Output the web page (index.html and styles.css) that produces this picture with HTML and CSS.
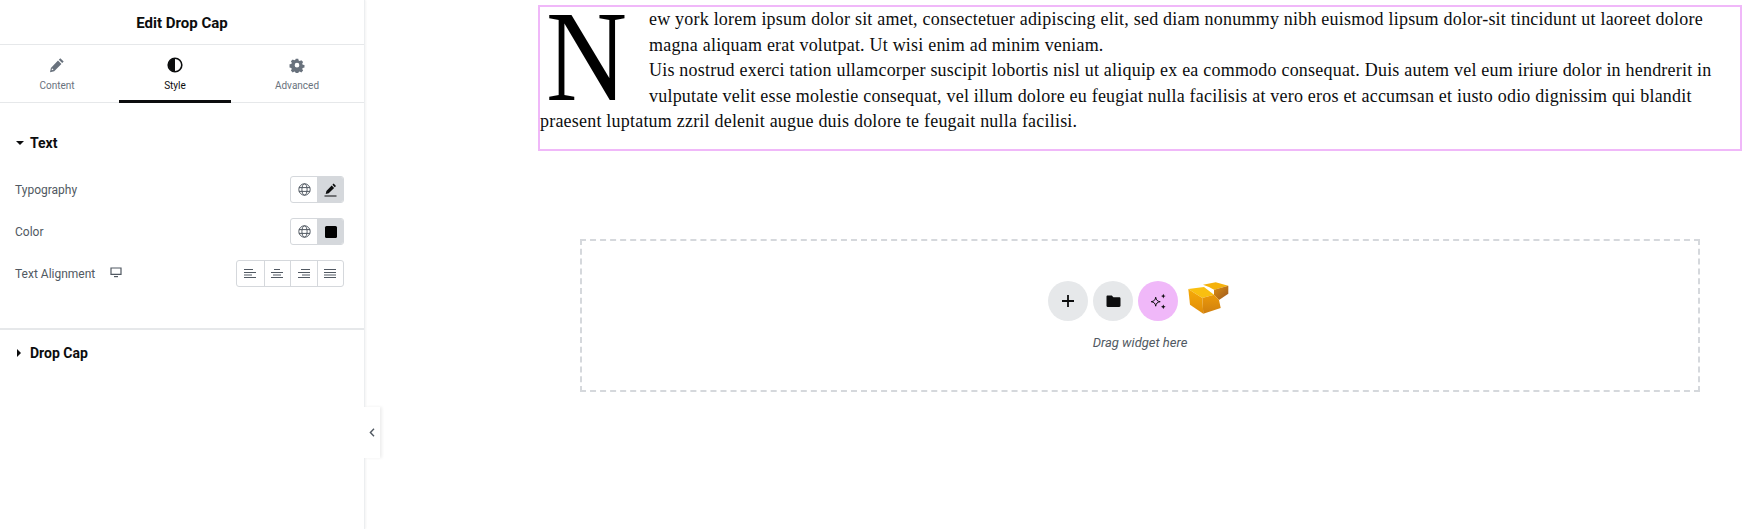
FILE: index.html
```html
<!DOCTYPE html>
<html lang="en">
<head>
  <meta charset="utf-8" />
  <title>Edit Drop Cap</title>
  <link rel="stylesheet" href="styles.css">
</head>
<body>
  <aside class="panel">
    <header class="panel-head">Edit Drop Cap</header>
    <nav class="tabs">
      <div class="tab">
        <svg width="16" height="16" viewBox="0 0 16 16"><path fill="#69727d" d="M11.3 1.2l3.4 3.4-1.5 1.500-3.400-3.400zM9 3.500l3.400 3.400-7.200 7.300-4.200 1 .9-4.300zM3 11.200l-.4 2 2-.5z"/></svg>
        <span>Content</span>
      </div>
      <div class="tab active">
        <svg width="16" height="16" viewBox="0 0 16 16"><circle cx="8" cy="8" r="6.800" fill="none" stroke="#0c0d0e" stroke-width="1.600"/><path fill="#0c0d0e" d="M8 1.500a6.500 6.500 0 0 0 0 13z"/></svg>
        <span>Style</span>
      </div>
      <div class="tab">
        <svg width="16" height="16" viewBox="0 0 16 16"><path fill="#69727d" fill-rule="evenodd" d="M6.600 1h2.800l.4 2 1.200.6 1.800-1 2 2-1 1.800.5 1.200 2 .4v2.800l-2 .4-.5 1.200 1 1.800-2 2-1.800-1-1.200.5-.4 2H6.600l-.4-2-1.200-.5-1.800 1-2-2 1-1.800-.5-1.200-2-.4V7.200l2-.4.5-1.200-1-1.800 2-2 1.800 1 1.200-.6zM8 5.600a2.600 2.600 0 1 0 0 5.200 2.600 2.600 0 0 0 0-5.200z" transform="translate(.8 .8) scale(.9)"/></svg>
        <span>Advanced</span>
      </div>
    </nav>

    <section class="section">
      <h3 class="section-title"><i class="caret-down"></i>Text</h3>
      <div class="control">
        <label>Typography</label>
        <div class="btn-group">
          <span class="btn">
            <svg width="13" height="13" viewBox="0 0 13 13"><g fill="none" stroke="#515962" stroke-width="1"><circle cx="6.500" cy="6.500" r="5.700"/><ellipse cx="6.500" cy="6.500" rx="2.600" ry="5.700"/><path d="M1 4.600h11M1 8.400h11"/></g></svg>
          </span>
          <span class="btn on">
            <svg width="13" height="14" viewBox="0 0 13 14"><path fill="#0c0d0e" d="M9.600.6l2.400 2.400-1.200 1.200-2.400-2.400zM7.700 2.500l2.400 2.400-5.400 5.400-3 .7.7-3z"/><path stroke="#0c0d0e" stroke-width="1.200" d="M.5 13h12"/></svg>
          </span>
        </div>
      </div>
      <div class="control">
        <label>Color</label>
        <div class="btn-group">
          <span class="btn">
            <svg width="13" height="13" viewBox="0 0 13 13"><g fill="none" stroke="#515962" stroke-width="1"><circle cx="6.500" cy="6.500" r="5.700"/><ellipse cx="6.500" cy="6.500" rx="2.600" ry="5.700"/><path d="M1 4.600h11M1 8.400h11"/></g></svg>
          </span>
          <span class="btn on"><i class="swatch"></i></span>
        </div>
      </div>
      <div class="control">
        <label>Text Alignment
          <svg class="device" width="12" height="11" viewBox="0 0 12 11"><path fill="none" stroke="#515962" stroke-width="1.200" d="M1 1h10v6.400H1z"/><path fill="#515962" d="M4 9h4v1.200H4z"/></svg>
        </label>
        <div class="btn-group wide">
          <span class="btn"><svg width="12" height="9" viewBox="0 0 12 9"><path stroke="#515962" d="M0 .5h9M0 3.500h12M0 6h8M0 8.500h12"/></svg></span>
          <span class="btn"><svg width="12" height="9" viewBox="0 0 12 9"><path stroke="#515962" d="M3 .5h6M0 3.500h12M2 6h8M0 8.500h12"/></svg></span>
          <span class="btn"><svg width="12" height="9" viewBox="0 0 12 9"><path stroke="#515962" d="M3 .5h9M0 3.500h12M4 6h8M0 8.500h12"/></svg></span>
          <span class="btn"><svg width="12" height="9" viewBox="0 0 12 9"><path stroke="#515962" d="M0 .5h12M0 3.500h12M0 6h12M0 8.500h12"/></svg></span>
        </div>
      </div>
    </section>

    <section class="section closed">
      <h3 class="section-title"><i class="caret-right"></i>Drop Cap</h3>
    </section>

    <div class="collapse">
      <svg width="6" height="9" viewBox="0 0 6 9"><path fill="none" stroke="#515962" stroke-width="1.400" d="M5 .8L1.400 4.500 5 8.200"/></svg>
    </div>
  </aside>

  <main class="canvas">
    <div class="widget">
      <p class="drop-text"><span class="cap">N</span>ew york lorem ipsum dolor sit amet, consectetuer adipiscing elit, sed diam nonummy nibh euismod lipsum dolor-sit tincidunt ut laoreet dolore magna aliquam erat volutpat. Ut wisi enim ad minim veniam.<br>Uis nostrud exerci tation ullamcorper suscipit lobortis nisl ut aliquip ex ea commodo consequat. Duis autem vel eum iriure dolor in hendrerit in vulputate velit esse molestie consequat, vel illum dolore eu feugiat nulla facilisis at vero eros et accumsan et iusto odio dignissim qui blandit praesent luptatum zzril delenit augue duis dolore te feugait nulla facilisi.</p>
    </div>

    <div class="dropzone">
      <div class="actions">
        <span class="round">
          <svg width="14" height="14" viewBox="0 0 14 14"><path stroke="#0c0d0e" stroke-width="1.800" d="M7 1v12M1 7h12"/></svg>
        </span>
        <span class="round">
          <svg width="15" height="13" viewBox="0 0 15 13"><path fill="#0c0d0e" d="M1.600.5h4.200l1.600 1.800h5.900c.6 0 1.200.5 1.200 1.200v7.300c0 .7-.6 1.200-1.200 1.200H1.600c-.7 0-1.100-.5-1.100-1.200V1.700C.5 1 .9.5 1.600.5z"/></svg>
        </span>
        <span class="round ai">
          <svg width="16" height="16" viewBox="0 0 16 16"><path fill="none" stroke="#0c0d0e" stroke-width="1" d="M5.700 4.200c.5 3 1.500 4 4.500 4.500-3 .5-4 1.500-4.500 4.500-.5-3-1.500-4-4.500-4.500 3-.5 4-1.500 4.500-4.500z"/><path fill="#0c0d0e" d="M13.300.8l.7 1.600 1.600.7-1.600.7-.7 1.600-.7-1.600-1.600-.7 1.600-.7zM13.300 11.500l.7 1.600 1.600.7-1.600.7-.7 1.600-.7-1.600-1.600-.7 1.600-.7z"/></svg>
        </span>
        <svg class="cube" width="42" height="34" viewBox="0 0 42 34">
          <defs>
            <linearGradient id="cubeLeft" x1="0" y1="0" x2="0" y2="1"><stop offset="0" stop-color="#f6ab08"/><stop offset="1" stop-color="#e08c08"/></linearGradient>
            <linearGradient id="cubeRight" x1="0" y1="0" x2="0" y2="1"><stop offset="0" stop-color="#ec9a08"/><stop offset="1" stop-color="#cf7f10"/></linearGradient>
            <linearGradient id="cubeBack" x1="0" y1="0" x2="1" y2="1"><stop offset="0" stop-color="#dd8f12"/><stop offset="1" stop-color="#9c5820"/></linearGradient>
          </defs>
          <path fill="#f5b20c" d="M15 2.700l12.700-2.400 12.600 3.400-14.300 4-5-2.700z"/>
          <path fill="url(#cubeBack)" d="M40.300 3.700v8l-9.300 6.300-5-5.300v-5z"/>
          <path fill="#f9bf10" d="M.3 7l15.700-2 10 7.700-11.700 3.300z"/>
          <path fill="url(#cubeLeft)" d="M.3 7l14 9 1 15.700-13.300-9z"/>
          <path fill="url(#cubeRight)" d="M14.300 16l11.700-3.300 5 5.300 1.700 8-17.400 5.700z"/>
        </svg>
      </div>
      <p class="drop-hint">Drag widget here</p>
    </div>
  </main>
</body>
</html>
```

FILE: styles.css
```css
* { box-sizing: border-box; }
html, body { height: 100%; }
body { margin: 0; display: flex; background: #fff; color: #0c0d0e; font-family: Roboto, Arial, sans-serif; overflow: hidden; }

/* left panel */
.panel { position: relative; flex: 0 0 365px; height: 529px; background: #fff; border-right: 1px solid #eceef0; box-shadow: 1px 0 2px rgba(0,0,0,.05); }
.panel-head { height: 45px; display: flex; align-items: center; justify-content: center; font-size: 15px; font-weight: 700; border-bottom: 1px solid #e6e8ea; padding-top: 1px; }
.tabs { display: grid; grid-template-columns: 114px 112px 122px; column-gap: 5px; height: 58px; border-bottom: 1px solid #e6e8ea; }
.tab { display: flex; flex-direction: column; align-items: center; padding-top: 12px; gap: 6px; font-size: 10px; color: #69727d; border-bottom: 3px solid transparent; height: 58px; }
.tab span { line-height: 13px; }
.tab.active { color: #0c0d0e; border-bottom-color: #0c0d0e; }

.section { padding: 0 20px 0 15px; border-bottom: 2px solid #e6e8ea; height: 227px; }
.section.closed { border-bottom: 0; height: auto; }
.section-title { margin: 0; padding-top: 32px; height: 73px; font-size: 14px; font-weight: 700; line-height: 16px; display: flex; align-items: flex-start; gap: 6px; }
.section.closed .section-title { padding-top: 15px; gap: 7px; }
.caret-down { width: 0; height: 0; margin: 6px 0 0 1px; border: 4px solid transparent; border-top: 4px solid #0c0d0e; border-bottom: 0; }
.caret-right { width: 0; height: 0; margin: 4px 2px 0 2px; border: 4px solid transparent; border-left: 4px solid #0c0d0e; border-right: 0; }

.control { display: flex; align-items: center; justify-content: space-between; height: 27px; margin-bottom: 15px; }
.control label { font-size: 12px; color: #515962; display: flex; align-items: center; }
.device { margin-left: 15px; margin-top: -2px; }
.btn-group { display: flex; border: 1px solid #d5d8dc; border-radius: 3px; height: 27px; overflow: hidden; }
.btn { width: 26px; display: flex; align-items: center; justify-content: center; border-left: 1px solid #d5d8dc; }
.btn-group.wide .btn { width: 26.500px; }
.btn:first-child { border-left: 0; }
.btn.on { background: #d5d8dc; border-left-color: #d5d8dc; }
.swatch { width: 12px; height: 12px; background: #000; border-radius: 1.500px; }

.collapse { position: absolute; left: 364px; top: 407px; width: 16px; height: 51px; background: #fff; display: flex; align-items: center; justify-content: center; box-shadow: 2px 0 3px rgba(0,0,0,.07); }

/* canvas */
.canvas { flex: 1; padding: 5px 16px 0 173px; }
.widget { border: 2px solid #f0b8f9; height: 146px; }
.drop-text { margin: 0; font-family: "Liberation Serif", "Times New Roman", serif; font-size: 18px; line-height: 25.500px; letter-spacing: .21px; color: #0c0d0e; }
.cap { float: left; width: 103px; height: 102px; margin-left: 6px; font-size: 129px; line-height: 100px; letter-spacing: 0; color: #000; transform: scaleX(.87); transform-origin: left top; }

.dropzone { margin: 88px 0 0 42px; width: 1120px; height: 153px; border: 2px dashed #d5d8dc; display: flex; flex-direction: column; align-items: center; padding-top: 40px; }
.actions { display: flex; align-items: center; gap: 5px; height: 40px; margin-left: -2px; }
.round { width: 40px; height: 40px; border-radius: 50%; background: #e6e8ea; display: flex; align-items: center; justify-content: center; }
.round.ai { background: #f0b8f9; }
.cube { margin-left: 5px; margin-top: -4px; }
.drop-hint { margin: 15px 0 0; font-size: 13px; font-style: italic; color: #515962; line-height: 14px; }
```
